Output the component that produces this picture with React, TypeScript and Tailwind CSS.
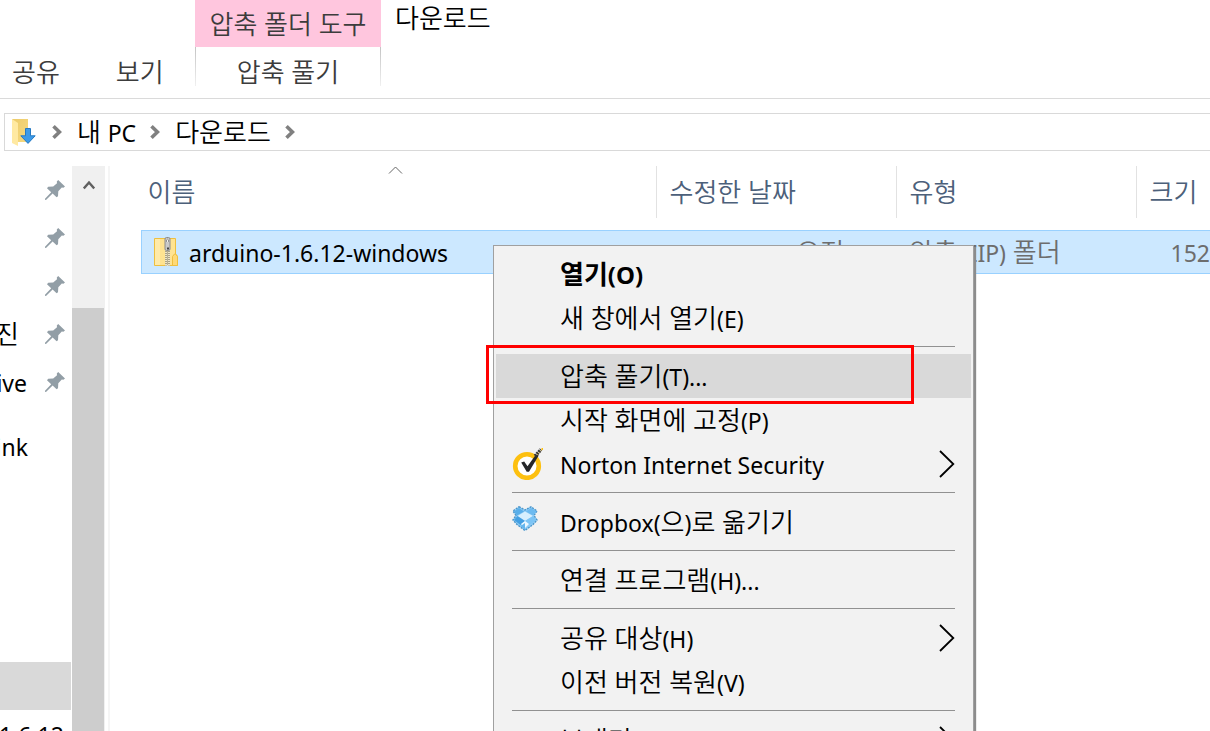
import { Fragment } from "react";

type LabelProps = { children: string; latin?: string };

/* Hangul glyphs are drawn slightly larger and lighter than the Latin runs beside them. */
function Label({ children, latin = "text-[23px] font-normal" }: LabelProps) {
  const parts = children.split(/([!-~]+(?: [!-~]+)*)/);
  return (
    <span className="whitespace-pre">
      {parts.map((part, i) =>
        i % 2 === 1 ? (
          <span key={i} className={latin}>
            {part}
          </span>
        ) : (
          <Fragment key={i}>{part}</Fragment>
        )
      )}
    </span>
  );
}

function Pin() {
  return (
    <svg className="h-5 w-5 shrink-0" viewBox="0 0 20 20" fill="#929ea6" aria-hidden="true">
      <path d="M13.2 0 20 6.6 18.4 7.8 16.8 7.6 13.3 11.2 13 16.2 11.6 17.2 7.6 13.4 1 20 0 19.8 0 18.8 6.2 12.2 2 8.2 3.2 6.8 8.2 6.6 12 3.2 11.8 1.6Z" />
    </svg>
  );
}

function CrumbArrow() {
  return (
    <svg className="h-[14px] w-[11px] shrink-0" viewBox="0 0 11 14" fill="none" stroke="#808080" strokeWidth="3.6" aria-hidden="true">
      <path d="M1.5 1.3 7.4 7 1.5 12.7" />
    </svg>
  );
}

function DownloadsIcon() {
  return (
    <svg className="h-7 w-6 shrink-0" viewBox="0 0 24 28" aria-hidden="true">
      <defs>
        <linearGradient id="folderBack" x1="0" y1="0" x2="1" y2="1">
          <stop offset="0" stopColor="#eccb6b" />
          <stop offset="1" stopColor="#f7da80" />
        </linearGradient>
      </defs>
      <path d="M0 1h16v23H4z" fill="url(#folderBack)" />
      <path d="M0 1 6 5v23L0 25z" fill="#ffe9a2" />
      <path d="M13.5 10.5h5v7.3h4.7L16 25.4 8.8 17.8h4.7z" fill="#3c9ae8" stroke="#2579c2" />
    </svg>
  );
}

function ZipIcon() {
  return (
    <svg className="h-[30px] w-6 shrink-0" viewBox="0 0 24 30" aria-hidden="true">
      <path d="M.5 1.5h21V17l1.8 2v9.5H.5z" fill="#ffe391" stroke="#eebf3f" />
      <path d="M1 2h5v26H1z" fill="#ffeaa8" />
      <path d="M18.5 28.5v-9l2-2.5h1l2 2.5v9z" fill="#ffd976" stroke="#eebf3f" />
      <path d="M11 12h5v17h-5z" fill="#eee5c6" />
      <path d="M12 14v14.5M15 14v14.5" stroke="#665f4c" strokeDasharray="1 1" fill="none" />
      <path d="M13.5 14.5v14" stroke="#857c62" strokeDasharray="1 1" fill="none" />
      <rect x="11" y=".5" width="5" height="13" rx="1.5" fill="#c9c9c9" stroke="#8b8b8b" />
      <path d="M12.5 5V3q1-1.6 2 0v2" fill="#f2f2f2" stroke="#777" strokeWidth=".7" />
      <path d="M13 10.5h2v2h-2z" fill="#444" />
    </svg>
  );
}

function NortonIcon() {
  return (
    <svg className="h-8 w-8" viewBox="0 0 32 32" aria-hidden="true">
      <circle cx="15" cy="18" r="11.8" fill="#fff" stroke="#fdc010" strokeWidth="4.6" />
      <path d="M9.2 14.5 12.2 13.4 15.5 18.2 24 6.6 26.7 7.6 17 23.7H14.7z" fill="#26272a" />
      <path d="M23 8 29 1.5" stroke="#333" strokeWidth="3.4" strokeDasharray="2 .7" />
      <path d="M25 7 30.5 1" stroke="#c9a33b" strokeWidth="1" strokeDasharray="1.2 1.4" />
      <path d="M29.5 0H31v2h-1.5z" fill="#fdc010" />
    </svg>
  );
}

function DropboxIcon() {
  return (
    <svg className="h-8 w-8" viewBox="0 0 32 32" aria-hidden="true">
      <path d="M7 .8 13 4 19 .8 25 5 22 9.5 25 14 21 18.5 13 24.5 5 18.5 1 14 4 9.5 1 5Z" fill="#8ccbf5" stroke="#4b96cb" strokeWidth="1.4" strokeDasharray="2 1" />
      <path d="M7 2 12 5.5 5 9.5 2 5.5Z" fill="#58aee9" />
      <path d="M19 2 24.5 5.5 21 9.5 14 5.5Z" fill="#6cbaf0" />
      <path d="M13 5.5 21 10 13 15 5.5 10Z" fill="#d6effe" />
      <path d="M5.5 10 13 15 8.5 19 2 14Z" fill="#439fe2" />
      <path d="M21 10 13 15 17.5 19 24 14Z" fill="#7cc4f5" />
      <path d="M13 15 17 18 13 22 9 18Z" fill="#edf8ff" />
      <path d="M6 18 8.5 20 13 17V23.5Z" fill="#65b6ee" />
    </svg>
  );
}

type Entry = { label: string; icon?: "norton" | "dropbox"; sub?: boolean; active?: boolean; bold?: boolean };

const groups: Entry[][] = [
  [{ label: "열기(O)", bold: true }, { label: "새 창에서 열기(E)" }],
  [
    { label: "압축 풀기(T)...", active: true },
    { label: "시작 화면에 고정(P)" },
    { label: "Norton Internet Security", icon: "norton", sub: true },
  ],
  [{ label: "Dropbox(으)로 옮기기", icon: "dropbox" }],
  [{ label: "연결 프로그램(H)..." }],
  [{ label: "공유 대상(H)", sub: true }, { label: "이전 버전 복원(V)" }],
  [{ label: "보내기(N)", sub: true }],
];

function ContextMenu() {
  return (
    <div role="menu" className="absolute left-[493px] top-[245px] w-[481px] border border-[#a0a0a0] bg-[#f2f2f2] px-[2px] py-[6px] text-black shadow-[2px_2px_1px_#8c8c8c]">
      {groups.map((group, g) => (
        <Fragment key={g}>
          {g > 0 && (
            <div role="separator" className="h-[14px] px-4 pt-[6px]">
              <div className="h-px bg-[#919191]" />
            </div>
          )}
          {group.map((item) => (
            <button
              key={item.label}
              role="menuitem"
              type="button"
              className={`relative flex h-11 w-full items-center text-left ${item.active ? "bg-[#d9d9d9]" : ""} ${item.bold ? "font-bold" : ""}`}
            >
              <span className="flex w-16 shrink-0 pl-4">
                {item.icon === "norton" && <NortonIcon />}
                {item.icon === "dropbox" && <DropboxIcon />}
              </span>
              <span className="flex-1">
                <Label latin={item.bold ? "text-[24px]" : "text-[23px] font-normal"}>{item.label}</Label>
              </span>
              {item.sub && (
                <svg className="mr-4 h-7 w-4" viewBox="0 0 16 28" fill="none" stroke="#000" strokeWidth="1.8" aria-hidden="true">
                  <path d="M1 1 14.3 14 1 27" />
                </svg>
              )}
              {item.active && (
                <span className="pointer-events-none absolute -left-[10px] -top-[9px] h-[59px] w-[428px] border-[3px] border-[#f00]" />
              )}
            </button>
          ))}
        </Fragment>
      ))}
    </div>
  );
}

const quickAccess = ["", "", "", "진", "ive"];

function Sidebar() {
  return (
    <nav className="w-[71px] shrink-0 overflow-hidden text-black">
      {quickAccess.map((name, i) => (
        <a key={i} href="#" className="flex h-12 items-center">
          <span className={`flex w-[27px] shrink-0 justify-end ${name === "진" ? "pr-2" : ""}`}>
            <Label>{name}</Label>
          </span>
          <span className="pl-[18px]">
            <Pin />
          </span>
        </a>
      ))}
      <a href="#" className="mt-4 flex h-12 w-7 items-center justify-end">
        <Label>ink</Label>
      </a>
      <div className="mt-48 h-12 bg-[#d9d9d9]" />
      <a href="#" className="flex h-12 w-16 items-center justify-end">
        <Label>1.6.12</Label>
      </a>
    </nav>
  );
}

function FileTable() {
  return (
    <div className="min-w-0 flex-1 overflow-hidden pl-[31px]">
      <table className="w-[1135px] table-fixed border-collapse text-left">
        <colgroup>
          <col className="w-[515px]" />
          <col className="w-60" />
          <col className="w-60" />
          <col />
        </colgroup>
        <thead className="text-[#4c607a]">
          <tr>
            {["이름", "수정한 날짜", "유형", "크기"].map((name, i) => (
              <th key={name} scope="col" className="h-16 p-0 pb-3 font-[350]">
                <div className={`relative flex h-[52px] items-center border-r border-[#e2e2e2] ${i === 0 ? "pl-[6px]" : "pl-[13px]"}`}>
                  <Label>{name}</Label>
                  {i === 0 && (
                    <svg className="absolute left-[246px] top-0 h-2 w-[15px]" viewBox="0 0 15 8" fill="none" stroke="#666" aria-hidden="true">
                      <path d="M1 7.5 7.5 1 14 7.5" />
                    </svg>
                  )}
                </div>
              </th>
            ))}
          </tr>
        </thead>
        <tbody>
          <tr className="h-[43px] border border-[#99d1ff] bg-[#cce8ff] text-[#6d6d6d]">
            <td className="p-0 text-black">
              <div className="flex items-center pl-3">
                <ZipIcon />
                <span className="pl-[11px]">
                  <Label>arduino-1.6.12-windows</Label>
                </span>
              </div>
            </td>
            <td className="whitespace-nowrap p-0 pl-[13px]">
              <Label>2016-10-25 오전 9:30</Label>
            </td>
            <td className="whitespace-nowrap p-0 pl-[13px]">
              <Label>압축(ZIP) 폴더</Label>
            </td>
            <td className="p-0 pl-[34px]">
              <Label>152,</Label>
            </td>
          </tr>
        </tbody>
      </table>
    </div>
  );
}

export default function App() {
  return (
    <div className="relative flex h-screen flex-col overflow-hidden bg-white font-['Noto_Sans','Noto_Sans_CJK_KR',sans-serif] text-[26px] font-[350] leading-8 text-black">
      <header className="flex h-[99px] shrink-0 items-start border-b border-[#dadada] text-[#3c3c3c]">
        <div className="flex w-[195px] shrink-0 gap-14 self-end pb-[10px] pl-3">
          <button type="button"><Label>공유</Label></button>
          <button type="button"><Label>보기</Label></button>
        </div>
        <div className="w-[186px] shrink-0 text-center">
          <div className="flex h-[47px] items-center justify-center bg-[#ffc6de]">
            <Label>압축 폴더 도구</Label>
          </div>
          <div className="flex h-[39px] bg-white">
            <span className="w-px bg-linear-to-b from-[#c4c4c4] to-[#f0f0f0]" />
            <button type="button" className="flex-1 pt-[9px]"><Label>압축 풀기</Label></button>
            <span className="w-px bg-linear-to-b from-[#c4c4c4] to-[#f0f0f0]" />
          </div>
        </div>
        <h1 className="pl-[14px] pt-[2px] font-[350] text-black"><Label>다운로드</Label></h1>
      </header>

      <nav className="ml-1 mt-[14px] flex h-[38px] shrink-0 items-center border border-r-0 border-[#d9d9d9] pl-[7px]">
        <DownloadsIcon />
        <span className="pl-4 pr-[14px]"><CrumbArrow /></span>
        <a href="#"><Label>내 PC</Label></a>
        <span className="px-[14px]"><CrumbArrow /></span>
        <a href="#"><Label>다운로드</Label></a>
        <span className="px-[14px]"><CrumbArrow /></span>
      </nav>

      <main className="mt-[15px] flex min-h-0 flex-1">
        <Sidebar />
        <div className="ml-px flex w-[33px] shrink-0 flex-col bg-[#f0f0f0]">
          <button type="button" aria-label="위로 스크롤" className="flex h-[142px] shrink-0 items-start justify-center pt-[14px]">
            <svg className="h-[10px] w-3" viewBox="0 0 12 10" fill="none" stroke="#606060" strokeWidth="2.4" aria-hidden="true">
              <path d="M.8 8.5 6 2.5 11.2 8.5" />
            </svg>
          </button>
          <div className="w-8 flex-1 bg-[#cdcdcd]" />
        </div>
        <div className="ml-[3px] w-[2px] shrink-0 bg-[#f5f5f5]" />
        <FileTable />
      </main>

      <ContextMenu />
    </div>
  );
}
